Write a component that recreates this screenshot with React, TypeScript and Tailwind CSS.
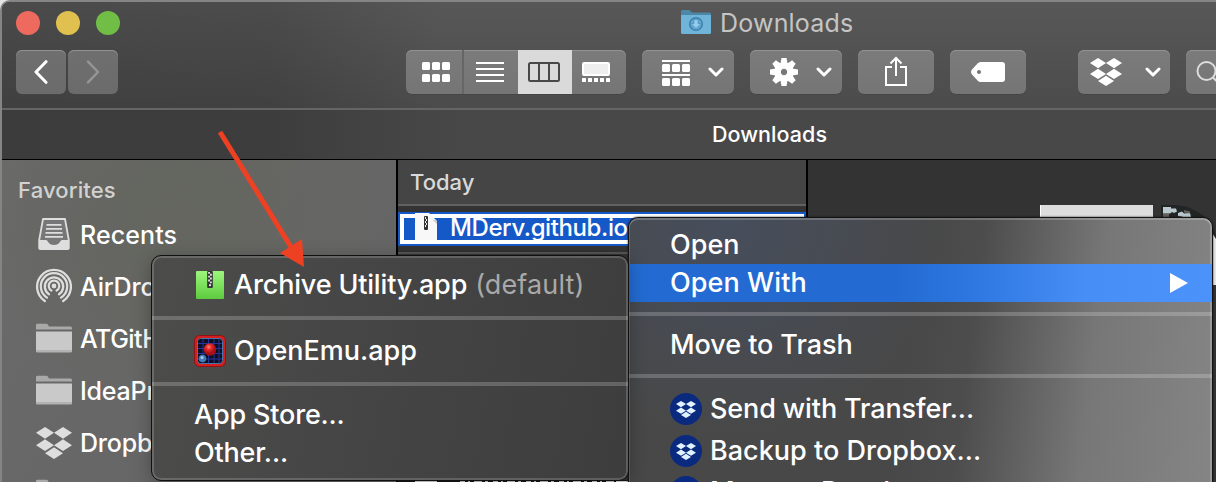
import React from 'react';

const DropboxGlyph = ({ className }: { className: string }) => (
  <svg className={className} viewBox="0 0 32 28" preserveAspectRatio="none" fill="currentColor">
    <path d="M8 0l8 5-8 5.200-8-5.200zM24 0l8 5-8 5.200-8-5.200zM8 10.800l8 5.100-8 5.100-8-5.100zM24 10.800l8 5.100-8 5.100-8-5.100zM16 17.800l8 5.100-8 5.100-8-5.100z" />
  </svg>
);

const Chevron = () => (
  <svg className="h-[10px] w-4" viewBox="0 0 16 10" fill="none" stroke="#fff" strokeWidth="3" strokeLinecap="round" strokeLinejoin="round">
    <path d="M2 2l6 6 6-6" />
  </svg>
);

const ToolButton = ({ className, children }: { className: string; children: React.ReactNode }) => (
  <div className={`flex h-11 shrink-0 items-center rounded-[6px] bg-gradient-to-b from-[#7b7b7b] to-[#757575] shadow-[inset_0_1px_0_#929292,0_1px_0_#444] ${className}`}>{children}</div>
);

const GridIcon = () => (
  <svg className="h-5 w-7" viewBox="0 0 28 20" fill="#fff">
    {[0, 10, 20].map((x) => [0, 12].map((y) => <rect key={`${x}-${y}`} x={x} y={y} width="8" height="8" rx="1.500" />))}
  </svg>
);

const GroupIcon = () => (
  <svg className="h-[26px] w-7" viewBox="0 0 28 26" fill="#fff">
    <rect width="28" height="2" />
    <rect y="14" width="28" height="2" />
    {[0, 10, 20].map((x) => [4, 18].map((y) => <rect key={`${x}-${y}`} x={x} y={y} width="8" height="8" rx="1.500" />))}
  </svg>
);

const Gear = () => (
  <svg className="h-7 w-7" viewBox="-14 -14 28 28">
    {[0, 45, 90, 135, 180, 225, 270, 315].map((a) => (
      <path key={a} d="M-3.600-8L-2.500-14h5L3.600-8z" fill="#fff" transform={`rotate(${a})`} />
    ))}
    <circle r="6.500" fill="none" stroke="#fff" strokeWidth="6.600" />
  </svg>
);

const Folder = () => (
  <svg className="h-[29px] w-9 -translate-y-[1.500px]" viewBox="0 0 36 29">
    <path d="M0 6V1.500Q0 0 1.500 0H10q1 0 1.600.8L13 3h21.500Q36 3 36 4.500V6z" fill="#a9a9a9" />
    <path d="M0 8h36v19.500q0 1.500-1.500 1.500h-33Q0 29 0 27.500z" fill="#c9c9c9" />
    <path d="M0 26.500h36v1q0 1.500-1.500 1.500h-33Q0 29 0 27.500z" fill="#b2b2b2" />
  </svg>
);

const Tray = () => (
  <svg className="h-8 w-8 -translate-y-px" viewBox="0 0 32 32">
    <path d="M5 1h22l3.800 21v8q0 1-1 1H2.200q-1 0-1-1v-8z" fill="#777" stroke="#dedede" strokeWidth="1.800" strokeLinejoin="round" />
    <path d="M1 22h7c2 0 2 5 8 5s6-5 8-5h7v9H1z" fill="#dedede" />
    <path d="M8.500 6.800h15M8 10.800h16M7.500 14.800h17M7 18.800h18" stroke="#dedede" strokeWidth="1.800" />
  </svg>
);

const AirDrop = () => (
  <svg className="h-9 w-9 -translate-y-px" viewBox="0 0 36 36" fill="none" stroke="#dedede" strokeWidth="2.300" strokeLinecap="round">
    <circle cx="18" cy="18" r="2.400" fill="#dedede" stroke="none" />
    <path d="M15.400 22.500A5.300 5.300 0 1 1 20.600 22.500" />
    <path d="M13 26.200A9.200 9.200 0 1 1 23 26.200" />
    <path d="M11 29.600A13.200 13.200 0 1 1 25 29.600" />
    <path d="M8.800 33A16.900 16.900 0 1 1 27.200 33" />
  </svg>
);

const SideRow = ({ icon, label, track }: { icon: React.ReactNode; label: string; track: string }) => (
  <div className="flex h-[52px] items-center gap-2 pl-[34px]">
    <span className="flex w-9 justify-center">{icon}</span>
    <span className={`whitespace-nowrap pt-[2px] text-[25px] font-[550] text-white ${track}`}>{label}</span>
  </div>
);

const Separator = () => <div className="h-1 bg-white/20" />;

const Zipper = ({ className }: { className: string }) => (
  <svg className={className} viewBox="0 0 6 18">
    <rect width="6" height="18" rx="1" fill="#333" />
    <path d="M1 1h2v2H1zM3 3h2v2H3zM1 5h2v2H1zM3 7h2v2H3zM1 9h2v2H1zM3 11h2v2H3z" fill="#ddd" />
    <rect x="2" y="14" width="2" height="2" fill="#eee" />
  </svg>
);

const ArchiveIcon = () => (
  <span className="flex h-7 w-7 justify-center rounded-[1px] bg-gradient-to-b from-[#9cf67c] to-[#5ecb3d]">
    <Zipper className="h-[17px] w-[6px]" />
  </span>
);

const EmuIcon = () => (
  <svg className="h-8 w-8" viewBox="0 0 32 32">
    <defs>
      <radialGradient id="ball" cx=".4" cy=".3"><stop stopColor="#ff8a7a" /><stop offset=".4" stopColor="#e92e2b" /><stop offset="1" stopColor="#a80f14" /></radialGradient>
    </defs>
    <rect x=".5" y=".5" width="31" height="31" rx="5" fill="#d3201f" stroke="#8c1414" />
    <rect x="3.500" y="3.500" width="25" height="25" rx="3" fill="#0c1022" stroke="#4a74a8" />
    <path d="M9 4v24M14.500 4v24M20 4v24M25 4v24M4 8.500h24M4 13.500h24M4 18.500h24M4 24h24" stroke="#24349a" />
    <circle cx="16" cy="14.500" r="6.200" fill="url(#ball)" />
    <circle cx="8.500" cy="23.500" r="3.800" fill="#4379b5" />
    <circle cx="8" cy="22.600" r="1.600" fill="#9cc7ea" />
  </svg>
);

const DropboxBadge = () => (
  <span className="flex h-8 w-8 items-center justify-center rounded-full bg-[#0a2a80] text-[#dff2fd]">
    <DropboxGlyph className="h-[17px] w-5" />
  </span>
);

export default function App() {
  return (
    <div className="relative h-[482px] w-[1216px] overflow-hidden bg-[#e4e4e4] font-['Inter','Liberation_Sans',sans-serif]">
      <div className="flex h-full flex-col overflow-hidden rounded-tl-[10px] border-l-2 border-t-2 border-[#858585] bg-[#333]">
        <header className="h-[108px] shrink-0 border-b-2 border-[#656565] bg-[linear-gradient(180deg,rgba(255,255,255,.03),rgba(0,0,0,.08)),linear-gradient(90deg,#454545_0,#464646_22%,#525252_36%,#525252)]">
          <div className="flex h-[41px] items-center pl-[14px]">
            <div className="flex gap-4">
              <span className="h-6 w-6 rounded-full bg-[#ee6a5e]" />
              <span className="h-6 w-6 rounded-full bg-[#e0c04f]" />
              <span className="h-6 w-6 rounded-full bg-[#71be47]" />
            </div>
            <svg className="ml-[561px] h-6 w-[30px] -translate-y-px" viewBox="0 0 30 24">
              <path d="M0 5V1.500Q0 0 1.500 0H8q1 0 1.500 1L11 2.500h17.500q1.500 0 1.500 1.500v3H0z" fill="#4e88a8" />
              <path d="M0 5h30v17.500q0 1.500-1.500 1.500h-27Q0 24 0 22.500z" fill="#71b4da" />
              <circle cx="15" cy="14" r="6.300" fill="#65a8d2" stroke="#3d80ad" strokeWidth="1.500" />
              <path d="M13 9.500h4v4h3l-5 5-5-5h3z" fill="#92cdee" stroke="#3d80ad" strokeWidth=".5" />
            </svg>
            <span className="ml-[9px] pt-[2px] text-[25px] tracking-[0.200px] text-[#c5c5c5]">Downloads</span>
          </div>
          <div className="flex pl-[14px] pt-[7px]">
            <ToolButton className="w-[50px] justify-center !from-[#6f6f6f] !to-[#6b6b6b]">
              <svg className="h-6 w-[14px]" viewBox="0 0 14 24" fill="none" stroke="#fff" strokeWidth="3" strokeLinecap="round" strokeLinejoin="round"><path d="M12 1.700L2 12l10 10.300" /></svg>
            </ToolButton>
            <ToolButton className="ml-[2px] w-[50px] justify-center !from-[#6f6f6f] !to-[#6b6b6b]">
              <svg className="h-6 w-[14px]" viewBox="0 0 14 24" fill="none" stroke="#959595" strokeWidth="2.500" strokeLinecap="round" strokeLinejoin="round"><path d="M2 1.700L12 12 2 22.300" /></svg>
            </ToolButton>
            <ToolButton className="ml-[288px] w-[220px] overflow-hidden">
              <span className="flex h-11 w-[58px] items-center justify-center border-r-2 border-[#666] pl-1"><GridIcon /></span>
              <span className="flex h-11 w-[54px] items-center justify-center pr-[2px]">
                <svg className="h-5 w-7" viewBox="0 0 28 20"><path d="M0 1h28M0 7h28M0 13h28M0 19h28" stroke="#fff" strokeWidth="2" /></svg>
              </span>
              <span className="flex h-11 w-[54px] items-center justify-center bg-[#dadada] pr-[2px]">
                <svg className="h-5 w-8" viewBox="0 0 32 20" fill="none" stroke="#484848" strokeWidth="2"><rect x="1" y="1" width="30" height="18" rx="1.500" /><path d="M11 1v18M21 1v18" /></svg>
              </span>
              <span className="flex h-11 w-[54px] items-center justify-center pr-[6px]">
                <svg className="h-5 w-7" viewBox="0 0 28 20"><rect x="1" y="1" width="26" height="12" rx="1" fill="#eee" stroke="#fff" strokeWidth="2" />{[0, 6, 12, 18, 24].map((x) => <rect key={x} x={x} y="16" width="4" height="4" rx=".5" fill="#fff" />)}</svg>
              </span>
            </ToolButton>
            <ToolButton className="ml-4 w-[92px] gap-[18px] pl-5"><span className="pt-[2px]"><GroupIcon /></span><Chevron /></ToolButton>
            <ToolButton className="ml-4 w-[92px] gap-[18px] pl-5"><Gear /><Chevron /></ToolButton>
            <ToolButton className="ml-4 w-[76px] justify-center">
              <svg className="h-[30px] w-6 -translate-y-px" viewBox="0 0 24 30" fill="none" stroke="#fff" strokeWidth="2"><path d="M8 11H2v18h20V11h-6M12 20V2M6.500 7.500L12 2l5.500 5.500" /></svg>
            </ToolButton>
            <ToolButton className="ml-4 w-[76px] justify-center">
              <svg className="h-5 w-[34px]" viewBox="0 0 34 20"><path fillRule="evenodd" d="M9.500 0H31q3 0 3 3v14q0 3-3 3H9.500Q8 20 6.500 18.500L1 12.500Q-1 10 1 7.500l5.500-6Q8 0 9.500 0zM8 8a2 2 0 1 0 .01 0z" fill="#fff" /></svg>
            </ToolButton>
            <ToolButton className="ml-[52px] w-[92px] gap-[23px] pl-3"><DropboxGlyph className="h-7 w-8 text-white" /><Chevron /></ToolButton>
            <ToolButton className="ml-4 w-[76px] pl-[10px]">
              <svg className="h-7 w-7" viewBox="0 0 28 28" fill="none" stroke="#ddd" strokeWidth="2"><circle cx="10.500" cy="13" r="9" /><path d="M17 19.500l7 7" /></svg>
            </ToolButton>
          </div>
        </header>
        <div className="flex h-[50px] shrink-0 items-center border-b border-black bg-[linear-gradient(90deg,#3c3c3c_0,#3d3d3d_22%,#484848_38%,#484848)] pl-[710px] text-[21.500px] font-[550] tracking-[0.050px] text-white">Downloads</div>

        <main className="flex min-h-0 flex-1">
          <aside className="w-[396px] shrink-0 overflow-hidden border-r-2 border-black bg-[radial-gradient(circle_at_180px_60px,#64665f_0,#656661_80px,transparent_200px),linear-gradient(120deg,#6a6a6a,#666_60%,#646464)]">
            <h2 className="h-[49px] pl-4 pt-[14px] text-[22px] font-medium leading-8 tracking-[0.150px] text-[#d2d2d2]">Favorites</h2>
            <SideRow icon={<Tray />} label="Recents" track="tracking-[0.100px]" />
            <SideRow icon={<AirDrop />} label="AirDrop" track="tracking-[-0.200px]" />
            <SideRow icon={<Folder />} label="ATGitHub" track="tracking-[-0.500px]" />
            <SideRow icon={<Folder />} label="IdeaProjects" track="tracking-[-0.200px]" />
            <SideRow icon={<DropboxGlyph className="h-8 w-9 text-[#dedede]" />} label="Dropbox" track="tracking-[-0.200px]" />
            <SideRow icon={<Folder />} label="" track="" />
          </aside>
          <section className="w-[410px] shrink-0 overflow-hidden border-r-2 border-black">
            <h2 className="h-[46px] border-b-2 border-[#616161] bg-[#454545] pl-3 text-[22px] font-[550] leading-[45px] text-[#d9d9d9]">Today</h2>
            <div className="mt-[6px] h-[34px] bg-[#1559c8] p-[2px]">
              <div className="flex h-[30px] border-4 border-white pl-[11px]">
                <svg className="-mt-[5px] h-[27px] w-[22px] shrink-0" viewBox="0 0 22 27">
                  <path d="M0 0h14l8 8v19H0z" fill="#f8f8f8" />
                  <path d="M13 5q3 0 4 1l5 5v-3L14 5z" fill="#c9c9c9" />
                  <rect x="9" y="3" width="4" height="14" rx="1" fill="#333" />
                  <path d="M10 4h1v2h-1zM11 6h1v2h-1zM10 8h1v2h-1zM11 10h1v2h-1zM10 12h1v2h-1z" fill="#eee" />
                </svg>
                <span className="ml-[13px] whitespace-nowrap text-[24px] font-medium leading-[20px] tracking-[-0.400px] text-white">MDerv.github.io</span>
              </div>
            </div>
            <div className="mt-[6px] h-[2px] bg-[#555]" />
          </section>
          <section className="flex flex-1 overflow-hidden bg-[#333] pl-[232px] pt-[45px]">
            <div className="h-12 w-[113px] border-l border-white bg-[#dcdddc]" />
            <svg className="h-20 w-[63px]" viewBox="0 0 63 80">
              <path d="M8 0h16q32 4 40 34v46H8z" fill="#222525" />
              <path d="M10 2h8v1.500h5l1 3-3 1.500-2-1-2 1.500h-7zM25 8l4-1.500 2 2 6-.5 1 4-5 2-4-2.500-4-.5z" fill="#b9c9ce" />
              <path d="M10 9h6v5h-6zM31 5l6 1.500v2l-6-1z" fill="#655f5d" />
              <path d="M58 26l5 8v46h-5z" fill="#e6e6e6" />
            </svg>
          </section>
        </main>
      </div>

      <svg className="absolute bottom-0 left-[398px] h-[2px] w-[232px]" viewBox="0 0 232 2">
        <path d="M0 0h232v2H0z" fill="#181818" />
        <path d="M17 1h22v1H17zM218 1h14v1h-14z" fill="#ddd" />
        <path d="M62 1.500h154" stroke="#ccc" strokeDasharray="5 3 2 4 8 3 3 5" />
      </svg>

      <div className="absolute left-[628px] top-[217px] h-[280px] w-[585px] overflow-hidden rounded-t-[10px] border border-[#141414] bg-[radial-gradient(circle_at_100px_0,rgba(69,84,112,.5)_0,transparent_220px),linear-gradient(97deg,#484848_0,#484848_48%,#4d4d4d_58%,#626262_68%,#777_78%,#858585)] text-[27px] text-white shadow-[0_0_2px_#111]">
        <div className="h-full rounded-t-[9px] pt-2 shadow-[inset_0_2px_0_rgba(255,255,255,.22),inset_-2px_0_0_rgba(255,255,255,.2),inset_1px_0_0_rgba(255,255,255,.16)]">
          <div className="flex h-[38px] items-center pl-[41px] font-medium">Open</div>
          <div className="flex h-[38px] items-center justify-between bg-[linear-gradient(90deg,#236bd2_0,#236bd2_45%,#2d76df_58%,#478ef6_78%,#4b93fa)] pl-[41px] pr-6 font-medium tracking-[0.080px]">
            <span>Open With</span>
            <svg className="h-5 w-[18px]" viewBox="0 0 18 20"><path d="M0 0l18 10L0 20z" fill="#fff" /></svg>
          </div>
          <div className="h-[10px]" />
          <Separator />
          <div className="flex h-[58px] items-center pl-[41px] font-medium tracking-[-0.070px]">Move to Trash</div>
          <Separator />
          <div className="h-[10px]" />
          <div className="flex h-[42px] items-center gap-2 pl-[41px] font-medium tracking-[-0.120px]"><DropboxBadge />Send with Transfer...</div>
          <div className="flex h-[42px] items-center gap-2 pl-[41px] font-medium tracking-[0.020px]"><DropboxBadge />Backup to Dropbox...</div>
          <div className="flex h-[40px] items-center gap-2 pl-[41px] font-medium"><DropboxBadge />Move to Dropbox...</div>
        </div>
      </div>

      <div className="absolute left-[151px] top-[255px] h-[226px] w-[478px] overflow-hidden rounded-[10px] border border-[#111] bg-[linear-gradient(100deg,#4c4d4b,#454545_45%,#3d3d3d)] text-[27px] font-medium text-white shadow-[0_4px_18px_rgba(0,0,0,.28)]">
        <div className="h-full rounded-[9px] shadow-[inset_0_0_0_2px_rgba(255,255,255,.17)]">
          <div className="flex h-[60px] items-center gap-[10px] pl-[44px] pb-[2px]"><ArchiveIcon /><span className="whitespace-nowrap tracking-[-0.170px]">Archive Utility.app <span className="ml-px font-normal tracking-[0.120px] text-[#a9a9a9]">(default)</span></span></div>
          <Separator />
          <div className="flex h-[62px] items-center gap-2 pl-[42px]"><EmuIcon />OpenEmu.app</div>
          <Separator />
          <div className="mt-[10px] flex h-[38px] items-center pl-[42px] tracking-[-0.180px]">App Store...</div>
          <div className="flex h-[38px] items-center pl-[42px] tracking-[-0.180px]">Other...</div>
        </div>
      </div>

      <svg className="pointer-events-none absolute left-[210px] top-[125px] h-[150px] w-[110px]" viewBox="210 125 110 150">
        <path d="M220 132L291 247" stroke="#ee4023" strokeWidth="5" />
        <path d="M304 267L280 253 302 239z" fill="#ee4023" />
      </svg>
    </div>
  );
}
